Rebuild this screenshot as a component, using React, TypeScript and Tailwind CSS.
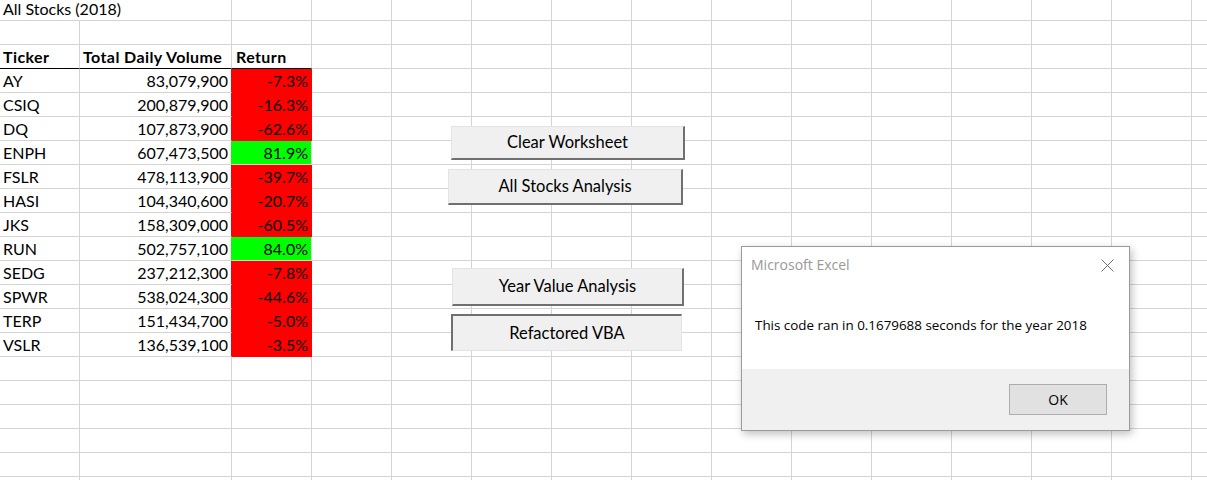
import clsx from "clsx";

type Stock = { ticker: string; volume: string; ret: string; up: boolean };

const stocks: Stock[] = [
  { ticker: "AY", volume: "83,079,900", ret: "-7.3%", up: false },
  { ticker: "CSIQ", volume: "200,879,900", ret: "-16.3%", up: false },
  { ticker: "DQ", volume: "107,873,900", ret: "-62.6%", up: false },
  { ticker: "ENPH", volume: "607,473,500", ret: "81.9%", up: true },
  { ticker: "FSLR", volume: "478,113,900", ret: "-39.7%", up: false },
  { ticker: "HASI", volume: "104,340,600", ret: "-20.7%", up: false },
  { ticker: "JKS", volume: "158,309,000", ret: "-60.5%", up: false },
  { ticker: "RUN", volume: "502,757,100", ret: "84.0%", up: true },
  { ticker: "SEDG", volume: "237,212,300", ret: "-7.8%", up: false },
  { ticker: "SPWR", volume: "538,024,300", ret: "-44.6%", up: false },
  { ticker: "TERP", volume: "151,434,700", ret: "-5.0%", up: false },
  { ticker: "VSLR", volume: "136,539,100", ret: "-3.5%", up: false },
];

const emptyCols = Array.from({ length: 11 }, (_, i) => i);
const emptyRows = Array.from({ length: 6 }, (_, i) => i);

const cell = "h-full shrink-0 flex items-end pb-[4px] leading-[14px] border-r border-b border-[#d4d4d4] whitespace-nowrap";

function Filler() {
  return (
    <>
      {emptyCols.map((i) => (
        <div key={i} className={clsx(cell, "w-20")} />
      ))}
      <div className="h-full flex-1 border-b border-[#d4d4d4]" />
    </>
  );
}

function Row({
  a,
  b,
  c,
  bold,
  fill,
  headerLine,
}: {
  a?: string;
  b?: string;
  c?: string;
  bold?: boolean;
  fill?: "red" | "green";
  headerLine?: boolean;
}) {
  return (
    <div className={clsx("flex h-6", bold && "font-bold tracking-[0.4px]")}>
      <div className={clsx(cell, "w-20 pl-[3px]", headerLine && "border-b-black")}>{a}</div>
      <div
        className={clsx(
          cell,
          "w-[152px]",
          bold ? "pl-[3px]" : "justify-end pr-[3px]",
          headerLine && "border-b-black",
          fill === "red" && "border-r-[#ff0000]",
          fill === "green" && "border-r-[#00ff00]"
        )}
      >
        {b}
      </div>
      <div
        className={clsx(
          cell,
          "w-20",
          bold ? "pl-[4px]" : "justify-end pr-[3px]",
          headerLine && "border-b-black",
          fill === "red" && "bg-[#ff0000] border-[#ff0000]",
          fill === "green" && "bg-[#00ff00] border-[#00ff00]"
        )}
      >
        {c}
      </div>
      <Filler />
    </div>
  );
}

function SheetButton({ label, className, pressed }: { label: string; className: string; pressed?: boolean }) {
  return (
    <div
      className={clsx(
        "absolute flex items-center justify-center bg-[#f0f0f0] text-[16.5px] text-black",
        pressed
          ? "border-t-2 border-l-2 border-b border-r border-t-[#707070] border-l-[#707070] border-b-[#e3e3e3] border-r-[#e3e3e3]"
          : "border-t border-l border-b-2 border-r-2 border-t-[#e3e3e3] border-l-[#e3e3e3] border-b-[#707070] border-r-[#707070]",
        className
      )}
    >
      {label}
    </div>
  );
}

export default function App() {
  return (
    <div className="relative h-[480px] w-[1207px] overflow-hidden bg-white font-['Lato',sans-serif] text-[16px] text-black">
      {/* title row, top cut off */}
      <div className="flex h-[21px]">
        <div className="h-full w-20 shrink-0 flex items-end pb-[5px] leading-[12px] pl-[3px] border-b border-[#d4d4d4] whitespace-nowrap">
          All Stocks (2018)
        </div>
        <div className={clsx(cell, "w-[152px]")} />
        <div className={clsx(cell, "w-20")} />
        <Filler />
      </div>
      <Row />
      <Row a="Ticker" b="Total Daily Volume" c="Return" bold headerLine />
      {stocks.map((s) => (
        <Row key={s.ticker} a={s.ticker} b={s.volume} c={s.ret} fill={s.up ? "green" : "red"} />
      ))}
      {emptyRows.map((i) => (
        <Row key={i} />
      ))}

      <SheetButton label="Clear Worksheet" className="left-[451px] top-[126px] h-[34px] w-[234px]" />
      <SheetButton label="All Stocks Analysis" className="left-[448px] top-[169px] h-[36px] w-[235px]" />
      <SheetButton label="Year Value Analysis" className="left-[452px] top-[268px] h-[38px] w-[232px]" />
      <SheetButton label="Refactored VBA" className="left-[451px] top-[314px] h-[37px] w-[231px]" pressed />

      {/* message box */}
      <div className="absolute left-[741px] top-[246px] flex h-[185px] w-[389px] flex-col border border-[#9a9a9a] bg-white font-['Open_Sans',sans-serif] shadow-[2px_3px_8px_rgba(0,0,0,0.25)]">
        <div className="h-[122px]">
          <div className="flex items-center justify-between pt-[8px] pl-[9px] pr-[15px]">
            <span className="text-[14px] leading-[20px] text-[#999999]">Microsoft Excel</span>
            <svg width="13" height="13" viewBox="0 0 13 13" className="mt-[1px]">
              <path d="M0.5 0.5 L12.5 12.5 M12.5 0.5 L0.5 12.5" stroke="#707070" strokeWidth="1" fill="none" />
            </svg>
          </div>
          <p className="mt-[40px] pl-[13px] text-[13.4px] leading-[20px] text-black">
            This code ran in 0.1679688 seconds for the year 2018
          </p>
        </div>
        <div className="flex flex-1 items-start justify-end bg-[#f0f0f0] pt-[15px] pr-[22px]">
          <div className="flex h-[31px] w-[98px] items-center justify-center border border-[#adadad] bg-[#e1e1e1] text-[14px] text-black">
            OK
          </div>
        </div>
      </div>
    </div>
  );
}
